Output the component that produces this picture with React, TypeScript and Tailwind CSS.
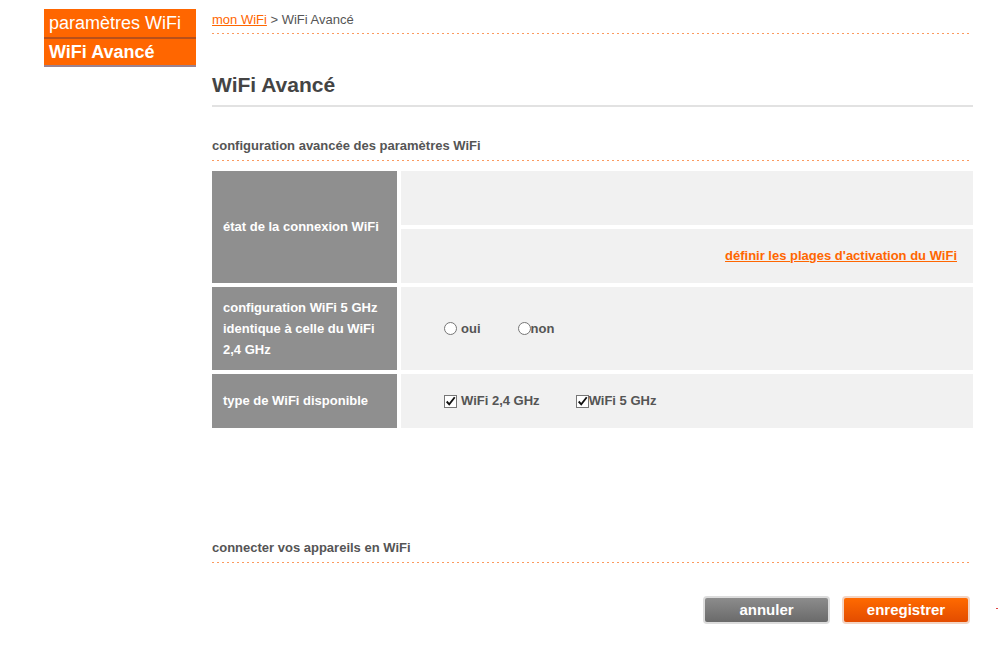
import React from "react";

const dotted =
  "h-px bg-[linear-gradient(to_right,#fb9a5e_0_2px,transparent_2px_5px)] bg-[length:5px_1px]";

function RadioDot() {
  return (
    <span className="inline-block w-[13px] h-[13px] rounded-full border border-[#767676] bg-white" />
  );
}

function CheckMark() {
  return (
    <span className="inline-flex w-[13px] h-[13px] border border-[#767676] bg-white items-center justify-center">
      <svg width="13" height="13" viewBox="0 0 13 13">
        <path d="M2 6.5 L5 9.8 L11.5 1.5" fill="none" stroke="#111" strokeWidth="2.2" />
      </svg>
    </span>
  );
}

export default function App() {
  return (
    <div className="w-[998px] h-[658px] bg-white font-['Liberation_Sans',Arial,sans-serif] flex relative">
      {/* side menu */}
      <div className="w-[152px] ml-[44px] mt-[9px] shrink-0">
        <div className="h-[30px] bg-[#ff6600] text-white text-[18px] leading-[29px] pl-[5px] border-b-2 border-[#b8501a]">
          paramètres WiFi
        </div>
        <div className="h-[28px] bg-[#ff6600] text-white text-[18px] font-bold leading-[26px] pl-[5px] border-b-2 border-[#9a8290]">
          WiFi Avancé
        </div>
      </div>

      {/* main */}
      <div className="ml-[16px] w-[761px] pt-[12px]">
        <div className="text-[13px] leading-[16px] text-[#555]">
          <span className="text-[#ff6600] underline">mon WiFi</span> &gt; WiFi Avancé
        </div>
        <div className={`${dotted} mt-[5px] w-[758px]`} />

        <h1 className="mt-[39px] text-[21px] leading-[24px] font-bold text-[#444]">WiFi Avancé</h1>
        <div className="mt-[8px] h-[2px] bg-[#e2e2e2]" />

        <div className="mt-[31px] text-[13px] leading-[16px] font-bold text-[#555]">
          configuration avancée des paramètres WiFi
        </div>
        <div className={`${dotted} mt-[6px] w-[758px]`} />

        <div className="mt-[10px] grid grid-cols-[185px_1fr] gap-x-[4px] gap-y-[4px] text-[13px] font-bold">
          <div className="bg-[#8f8f8f] text-white flex items-center pl-[11px]">état de la connexion WiFi</div>
          <div className="flex flex-col gap-[4px]">
            <div className="h-[54px] bg-[#f1f1f1]" />
            <div className="h-[54px] bg-[#f1f1f1] flex items-center justify-end pr-[16px]">
              <span className="text-[#ff6600] underline">définir les plages d'activation du WiFi</span>
            </div>
          </div>

          <div className="h-[83px] bg-[#8f8f8f] text-white flex items-center pl-[11px] leading-[21px]">
            <span>
              configuration WiFi 5 GHz
              <br />
              identique à celle du WiFi
              <br />
              2,4 GHz
            </span>
          </div>
          <div className="bg-[#f1f1f1] flex items-center pl-[43px] text-[#555]">
            <span className="flex items-center gap-[4px]">
              <RadioDot />
              oui
            </span>
            <span className="flex items-center ml-[37px]">
              <RadioDot />
              non
            </span>
          </div>

          <div className="h-[54px] bg-[#8f8f8f] text-white flex items-center pl-[11px]">type de WiFi disponible</div>
          <div className="bg-[#f1f1f1] flex items-center pl-[43px] text-[#555]">
            <span className="flex items-center gap-[4px]">
              <CheckMark />
              WiFi 2,4 GHz
            </span>
            <span className="flex items-center ml-[36px]">
              <CheckMark />
              WiFi 5 GHz
            </span>
          </div>
        </div>

        <div className="mt-[112px] text-[13px] leading-[16px] font-bold text-[#555]">
          connecter vos appareils en WiFi
        </div>
        <div className={`${dotted} mt-[6px] w-[758px]`} />

        <div className="mt-[33px] flex justify-end gap-[12px] pr-[3px]">
          <button className="w-[127px] h-[28px] rounded-[4px] border-2 border-[#dcdcdc] bg-[linear-gradient(#8c8c8c,#6a6a6a)] text-white text-[15px] font-bold leading-[22px]">
            annuler
          </button>
          <button className="w-[128px] h-[28px] rounded-[4px] border-2 border-[#f2d4c4] bg-[linear-gradient(#ff6a00,#e34c00)] text-white text-[15px] font-bold leading-[22px]">
            enregistrer
          </button>
        </div>
      </div>
      <span className="absolute left-[996px] top-[608px] w-[2px] h-px bg-[#e04040]" />
    </div>
  );
}
